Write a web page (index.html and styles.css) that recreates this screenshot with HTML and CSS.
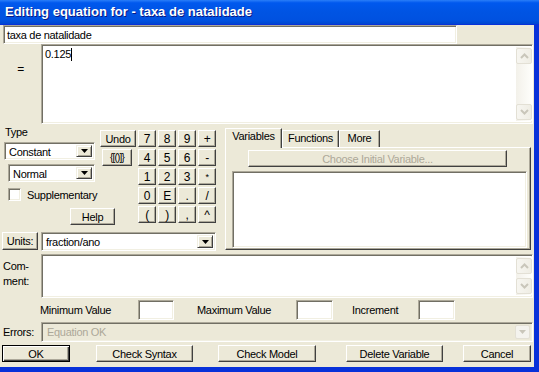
FILE: index.html
```html
<!DOCTYPE html>
<html lang="en">
<head>
    <meta charset="UTF-8">
    <title>Editing equation for - taxa de natalidade</title>
    <link rel="stylesheet" href="styles.css">
</head>
<body>
    <div class="window">
        <div class="titlebar">Editing equation for - taxa de natalidade</div>

        <div class="client">
            <!-- variable name -->
            <div class="field name-field">taxa de natalidade</div>

            <!-- equation -->
            <div class="eq-row">
                <div class="eq-label">=</div>
                <div class="field eq-box">
                    <div class="eq-text">0.125<span class="caret"></span></div>
                    <div class="vscroll">
                        <div class="sbtn"><svg width="9" height="6"><path d="M1 5 L4.5 1.5 L8 5" stroke="#c9c6ba" stroke-width="2" fill="none"/></svg></div>
                        <div class="sbtn"><svg width="9" height="6"><path d="M1 1 L4.5 4.5 L8 1" stroke="#c9c6ba" stroke-width="2" fill="none"/></svg></div>
                    </div>
                </div>
            </div>

            <div class="mid">
                <div class="mid-left">
                    <div class="mid-top">
                        <div class="type-area">
                            <div class="type-top">
                                <div class="type-col">
                                    <div class="type-label">Type</div>
                                    <div class="field combo combo-type">
                                        <span class="combo-text">Constant</span>
                                        <span class="drop"><svg width="7" height="4"><path d="M0 0 H7 L3.5 4 Z" fill="#000"/></svg></span>
                                    </div>
                                    <div class="field combo combo-normal">
                                        <span class="combo-text">Normal</span>
                                        <span class="drop"><svg width="7" height="4"><path d="M0 0 H7 L3.5 4 Z" fill="#000"/></svg></span>
                                    </div>
                                    <div class="check"><span class="check-box"></span>Supplementary</div>
                                </div>
                                <div class="undo-col">
                                    <div class="btn undo">Undo</div>
                                    <div class="btn brackets">{[()]}</div>
                                </div>
                            </div>
                            <div class="btn help">Help</div>
                        </div>

                        <div class="keypad">
                            <div class="btn key">7</div><div class="btn key">8</div><div class="btn key">9</div><div class="btn key">+</div>
                            <div class="btn key">4</div><div class="btn key">5</div><div class="btn key">6</div><div class="btn key">-</div>
                            <div class="btn key">1</div><div class="btn key">2</div><div class="btn key">3</div><div class="btn key small">*</div>
                            <div class="btn key">0</div><div class="btn key">E</div><div class="btn key">.</div><div class="btn key">/</div>
                            <div class="btn key">(</div><div class="btn key">)</div><div class="btn key">,</div><div class="btn key">^</div>
                        </div>
                    </div>

                    <div class="units-row">
                        <div class="btn units">Units:</div>
                        <div class="field combo combo-units">
                            <span class="combo-text">fraction/ano</span>
                            <span class="drop"><svg width="7" height="4"><path d="M0 0 H7 L3.5 4 Z" fill="#000"/></svg></span>
                        </div>
                    </div>
                </div>

                <div class="tabs">
                    <div class="tab-strip">
                        <div class="tab active">Variables</div>
                        <div class="tab tab-functions">Functions</div>
                        <div class="tab tab-more">More</div>
                    </div>
                    <div class="tab-panel">
                        <div class="btn choose">Choose Initial Variable...</div>
                        <div class="field var-list"></div>
                    </div>
                </div>
            </div>

            <!-- comment -->
            <div class="comment-row">
                <div class="comment-label">Com-<br>ment:</div>
                <div class="field comment-box">
                    <div class="vscroll">
                        <div class="sbtn"><svg width="9" height="6"><path d="M1 5 L4.5 1.5 L8 5" stroke="#c9c6ba" stroke-width="2" fill="none"/></svg></div>
                        <div class="sbtn"><svg width="9" height="6"><path d="M1 1 L4.5 4.5 L8 1" stroke="#c9c6ba" stroke-width="2" fill="none"/></svg></div>
                    </div>
                </div>
            </div>

            <div class="range-row">
                <span class="range-label min-label">Minimum Value</span>
                <div class="field range-box box-min"></div>
                <span class="range-label max-label">Maximum Value</span>
                <div class="field range-box"></div>
                <span class="range-label inc-label">Increment</span>
                <div class="field range-box"></div>
            </div>

            <div class="errors-row">
                <span class="errors-label">Errors:</span>
                <div class="field errors-box">
                    <span class="errors-text">Equation OK</span>
                    <span class="drop-xp"><svg width="7" height="4"><path d="M0 0 H7 L3.5 4 Z" fill="#c9c6ba"/></svg></span>
                </div>
            </div>

            <div class="button-row">
                <div class="btn default btn-ok">OK</div>
                <div class="btn btn-syntax">Check Syntax</div>
                <div class="btn btn-model">Check Model</div>
                <div class="btn btn-delete">Delete Variable</div>
                <div class="btn btn-cancel">Cancel</div>
            </div>
        </div>
    </div>
</body>
</html>
```

FILE: styles.css
```css
* {
    margin: 0;
    padding: 0;
    box-sizing: border-box;
}

body {
    font-family: 'Liberation Sans', Arial, sans-serif;
    font-size: 11px;
    letter-spacing: -0.3px;
    color: #000;
    background: #ece9d8;
}

.window {
    width: 539px;
    height: 372px;
    background: #0831d9;
    overflow: hidden;
}

.titlebar {
    height: 24px;
    padding-left: 5px;
    line-height: 24px;
    font-size: 13px;
    font-weight: bold;
    letter-spacing: 0;
    color: #fff;
    text-shadow: 1px 1px #0a1883;
    background: linear-gradient(to bottom, #2a7ef8 0%, #0058ee 12%, #0054e3 50%, #0051e0 85%, #0046cf 100%);
}

.client {
    width: 534px;
    height: 342px;
    background: #ece9d8;
}

/* common controls */
.field {
    background: #fff;
    border-top: 1px solid #aca899;
    border-left: 1px solid #aca899;
    border-bottom: 1px solid #fff;
    border-right: 1px solid #fff;
    box-shadow: inset 1px 1px #716f64, inset -1px -1px #f1efe2;
}

.btn {
    display: flex;
    align-items: center;
    justify-content: center;
    background: #ece9d8;
    border-top: 1px solid #fff;
    border-left: 1px solid #fff;
    border-bottom: 1px solid #404040;
    border-right: 1px solid #404040;
    box-shadow: inset -1px -1px #aca899;
    white-space: nowrap;
}

.btn.default {
    border: 1px solid #000;
    box-shadow: inset 1px 1px #fff, inset -1px -1px #404040, inset -2px -2px #aca899;
}

.combo {
    display: flex;
    align-items: stretch;
    padding: 2px;
}

.combo-text {
    flex: 1;
    padding-left: 2px;
    line-height: 14px;
}

.drop {
    width: 16px;
    display: flex;
    align-items: center;
    justify-content: center;
    background: #ece9d8;
    border-top: 1px solid #f1efe2;
    border-left: 1px solid #f1efe2;
    border-bottom: 1px solid #404040;
    border-right: 1px solid #404040;
    box-shadow: inset 1px 1px #fff, inset -1px -1px #aca899;
}

.vscroll {
    width: 16px;
    display: flex;
    flex-direction: column;
    justify-content: space-between;
    padding: 1px 0;
    background: linear-gradient(to right, #f3f1ea, #fefefb);
}

.sbtn {
    height: 16px;
    display: flex;
    align-items: center;
    justify-content: center;
    border: 1px solid #e3e0d5;
    border-radius: 2px;
    background: linear-gradient(to right, #f7f6f1, #efede4);
}

/* name + equation */
.name-field {
    margin: 1px 0 0 3px;
    width: 454px;
    height: 19px;
    padding: 2px 0 0 3px;
    line-height: 14px;
}

.eq-row {
    display: flex;
    height: 80px;
}

.eq-label {
    width: 41px;
    padding-top: 18px;
    text-align: center;
    font-size: 12px;
}

.eq-box {
    width: 492px;
    display: flex;
    padding: 2px 0 2px 3px;
}

.eq-text {
    flex: 1;
    line-height: 14px;
}

.caret {
    display: inline-block;
    width: 1px;
    height: 13px;
    background: #000;
    vertical-align: -3px;
}

/* middle block */
.mid {
    display: flex;
    margin-top: 1px;
    height: 126px;
}

.mid-left {
    width: 218px;
}

.mid-top {
    display: flex;
    height: 100px;
}

.type-area {
    width: 137px;
}

.type-top {
    display: flex;
}

.type-col {
    width: 99px;
}

.type-label {
    height: 16px;
    padding-left: 5px;
    line-height: 14px;
}

.combo-type {
    margin: 1px 0 0 4px;
    width: 91px;
    height: 18px;
}

.combo-normal {
    margin: 4px 0 0 8px;
    width: 87px;
    height: 18px;
}

.check {
    display: flex;
    align-items: center;
    margin: 6px 0 0 8px;
    height: 13px;
}

.check-box {
    width: 13px;
    height: 13px;
    margin-right: 6px;
    background: #fff;
    border-top: 1px solid #aca899;
    border-left: 1px solid #aca899;
    border-bottom: 1px solid #fff;
    border-right: 1px solid #fff;
    box-shadow: inset 1px 1px #716f64, inset -1px -1px #f1efe2;
}

.undo-col {
    margin: 5px 0 0 1px;
}

.undo {
    width: 36px;
    height: 17px;
}

.brackets {
    width: 30px;
    height: 17px;
    margin: 2px 0 0 2px;
    font-size: 10px;
    letter-spacing: -0.8px;
}

.help {
    width: 45px;
    height: 17px;
    margin: 7px 0 0 70px;
}

.keypad {
    display: grid;
    grid-template-columns: repeat(4, 18px);
    grid-auto-rows: 17px;
    gap: 2px;
    margin: 5px 0 0 1px;
}

.key {
    font-size: 12px;
}

.key.small {
    font-size: 9px;
}

.units-row {
    display: flex;
    margin-top: 7px;
}

.units {
    width: 36px;
    height: 18px;
    margin-left: 2px;
}

.combo-units {
    width: 175px;
    height: 19px;
    margin-left: 3px;
}

/* tabs */
.tabs {
    width: 306px;
    margin-left: 7px;
}

.tab-strip {
    display: flex;
    align-items: flex-end;
    height: 22px;
}

.tab {
    height: 17px;
    padding-top: 1px;
    display: flex;
    justify-content: center;
    background: #ece9d8;
    border-top: 1px solid #fff;
    border-left: 1px solid #fff;
    border-right: 1px solid #404040;
    box-shadow: inset -1px 0 #aca899;
}

.tab.active {
    width: 57px;
    height: 20px;
    margin-bottom: -1px;
    position: relative;
    z-index: 1;
}

.tab-functions {
    width: 57px;
}

.tab-more {
    width: 41px;
}

.tab-panel {
    height: 103px;
    border-top: 1px solid #fff;
    border-left: 1px solid #fff;
    border-bottom: 1px solid #404040;
    border-right: 1px solid #404040;
    box-shadow: inset -1px -1px #aca899;
}

.choose {
    width: 259px;
    height: 17px;
    margin: 2px 0 0 22px;
    color: #aca899;
}

.var-list {
    width: 295px;
    height: 77px;
    margin: 4px 0 0 6px;
}

/* comment */
.comment-row {
    display: flex;
    margin-top: 3px;
    height: 44px;
}

.comment-label {
    width: 41px;
    padding: 5px 0 0 3px;
    line-height: 15px;
}

.comment-box {
    width: 492px;
    display: flex;
    justify-content: flex-end;
    padding: 2px 0;
}

/* range */
.range-row {
    display: flex;
    align-items: center;
    margin-top: 2px;
    height: 20px;
}

.range-label {
    padding-bottom: 1px;
}

.min-label {
    width: 98px;
    margin-left: 40px;
}

.max-label {
    width: 99px;
    margin-left: 23px;
}

.inc-label {
    width: 66px;
    margin-left: 19px;
}

.range-box {
    width: 37px;
    height: 20px;
}

.box-min {
    width: 36px;
}

/* errors */
.errors-row {
    display: flex;
    align-items: center;
    margin-top: 2px;
    height: 20px;
}

.errors-label {
    width: 41px;
    padding-left: 3px;
}

.errors-box {
    width: 492px;
    height: 20px;
    display: flex;
    padding: 2px;
    background: #ece9d8;
}

.errors-text {
    flex: 1;
    padding-left: 3px;
    line-height: 15px;
    color: #aca899;
}

.drop-xp {
    width: 15px;
    display: flex;
    align-items: center;
    justify-content: center;
    border: 1px solid #e3e0d5;
    border-radius: 2px;
    background: #f4f3ee;
}

/* dialog buttons */
.button-row {
    display: flex;
    margin-top: 3px;
    height: 17px;
}

.button-row .btn {
    height: 17px;
}

.btn-ok {
    width: 68px;
    margin-left: 2px;
}

.btn-syntax {
    width: 97px;
    margin-left: 26px;
}

.btn-model {
    width: 98px;
    margin-left: 25px;
}

.btn-delete {
    width: 97px;
    margin-left: 30px;
}

.btn-cancel {
    width: 68px;
    margin-left: 20px;
}
```
